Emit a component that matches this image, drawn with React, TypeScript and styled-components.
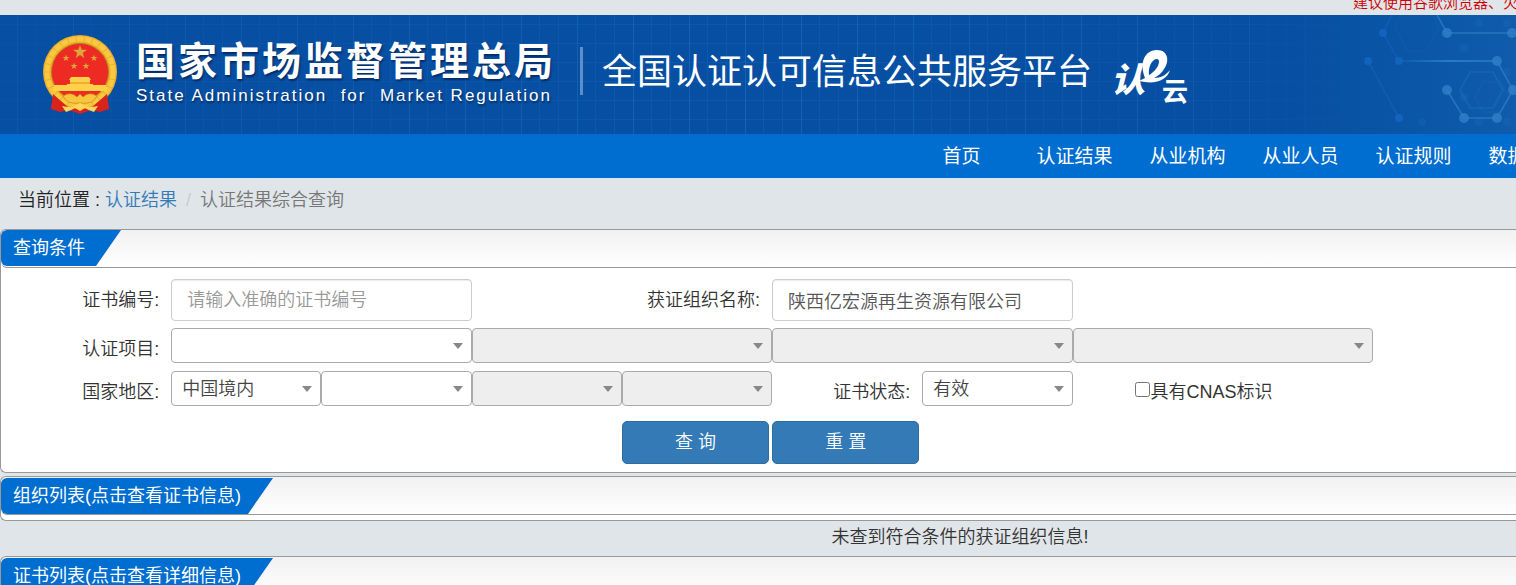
import React from 'react';
import styled, { createGlobalStyle } from 'styled-components';

const Global = createGlobalStyle`
  * { box-sizing: border-box; }
  html { background: #e0e5e9; }
  body {
    margin: 0;
    color: #333;
    font: 350 18px/27px "Liberation Sans", "Noto Sans CJK SC", sans-serif;
    overflow-x: hidden;
  }
  input, select, button { font: inherit; }
`;

const Notice = styled.div`
  height: 15px;
  overflow: hidden;
  display: flex;
  align-items: flex-end;
  padding-left: 1353px;
  color: #c00;
  font-size: 15px;
  line-height: 24px;
  white-space: nowrap;
`;

const Header = styled.header`
  position: relative;
  height: 119px;
  overflow: hidden;
  display: flex;
  align-items: flex-start;
  padding: 20px 0 0 41px;
  background: #064fa2;
  color: #fff;
  white-space: nowrap;
`;

const Backdrop = styled.svg`
  position: absolute;
  inset: 0;
  width: 100%;
  height: 100%;
`;

const Emblem = styled.svg`
  position: relative;
  width: 78px;
  height: 80px;
  flex: none;
`;

const Agency = styled.div`
  position: relative;
  margin-left: 17px;
  padding-top: 3px;
  text-shadow: 1px 2px 2px rgba(0, 20, 60, 0.6);
`;

const AgencyName = styled.div`
  font-size: 39px;
  line-height: 48px;
  font-weight: 700;
  letter-spacing: 3px;
`;

const AgencyEnglish = styled.div`
  font: 400 17px/20px "Liberation Sans", sans-serif;
  letter-spacing: 2px;
  white-space: pre;
`;

const Divider = styled.div`
  position: relative;
  width: 3px;
  height: 48px;
  margin: 12px 19px 0 24px;
  background: #5c8fca;
`;

const Platform = styled.h1`
  position: relative;
  margin: 12px 20px 0 0;
  font-size: 35px;
  line-height: 50px;
  font-weight: 400;
`;

const CloudLogo = styled.svg`
  position: relative;
  width: 78px;
  height: 58px;
  margin-top: 14px;
  flex: none;
  fill: #fff;
`;

const CloudText = styled.text`
  font: 700 26px "Noto Sans CJK SC", sans-serif;
`;

const BrushText = styled.text`
  font: italic 900 34px "Noto Sans CJK SC", sans-serif;
`;

const Nav = styled.nav`
  height: 44px;
  display: flex;
  overflow: hidden;
  padding-left: 905px;
  background: #006dd0;
`;

const NavLink = styled.a`
  flex: 0 0 113px;
  color: #fff;
  font-size: 19px;
  line-height: 46px;
  font-weight: 400;
  text-align: center;
  text-decoration: none;
  white-space: nowrap;
`;

const Crumbs = styled.div`
  display: flex;
  height: 51px;
  padding: 9px 0 0 18px;
  color: #777;
`;

const Here = styled.span`
  color: #222;
  white-space: pre;
`;

const CrumbLink = styled.a`
  color: #337ab7;
  text-decoration: none;
`;

const Slash = styled.span`
  padding: 0 9px;
  color: #ccc;
`;

const Panel = styled.section`
  border: 1px solid #999;
  border-right: 0;
  border-radius: 6px 0 0 6px;
  background: #fff;
  margin-bottom: 3px;
`;

const PanelHead = styled.div<{ $inset?: boolean }>`
  height: 38px;
  padding-top: ${p => (p.$inset ? 1 : 0)}px;
  border-bottom: 1px solid #999;
  border-radius: 6px 0 0 6px;
  background: linear-gradient(#f1f1f1, #fff);
`;

const Tab = styled.h2<{ $wide?: boolean }>`
  width: ${p => (p.$wide ? 272 : 120)}px;
  height: 36px;
  margin: 0;
  padding-left: 12px;
  border-radius: 6px 0 0 6px;
  background: #006dd0;
  clip-path: polygon(0 0, 100% 0, calc(100% - 25px) 100%, 0 100%);
  color: #fff;
  font-size: 18px;
  line-height: 37px;
  font-weight: 400;
  white-space: nowrap;
`;

const Form = styled.form`
  display: grid;
  grid-template-columns: repeat(9, 1fr);
  padding: 11px 143px 8px 20px;
`;

const Label = styled.label<{ $span?: number }>`
  grid-column: span ${p => p.$span ?? 1};
  padding: 8px 12px 0 0;
  text-align: right;
  white-space: nowrap;
`;

const Spacer = styled.span`
  grid-column: span 2;
`;

const TextInput = styled.input`
  grid-column: span 2;
  width: 100%;
  min-width: 0;
  height: 42px;
  margin-bottom: 7px;
  padding: 0 15px;
  border: 1px solid #ccc;
  border-radius: 4px;
  box-shadow: inset 0 1px 1px rgba(0, 0, 0, 0.08);
  color: #555;
  &::placeholder { color: #999; }
`;

const Select = styled.select<{ $span?: number }>`
  grid-column: span ${p => p.$span ?? 1};
  appearance: none;
  width: 100%;
  height: 35px;
  margin-bottom: 8px;
  padding: 2px 10px 0;
  border: 1px solid #aaa;
  border-radius: 4px;
  color: #444;
  opacity: 1;
  background: #fff url("data:image/svg+xml,%3Csvg xmlns='http://www.w3.org/2000/svg' width='10' height='6'%3E%3Cpath d='M0 0h10L5 6z' fill='%23888'/%3E%3C/svg%3E") no-repeat right 8px center;
  &:disabled { background-color: #eee; }
`;

const Check = styled.label`
  grid-column: span 2;
  display: flex;
  padding: 8px 0 0 62px;
  white-space: nowrap;
`;

const CheckBox = styled.input`
  width: 15px;
  height: 15px;
  margin: 3px 1px 0 0;
`;

const Actions = styled.div`
  grid-column: 5 / span 2;
  display: grid;
  grid-template-columns: 1fr 1fr;
  column-gap: 3px;
  margin-right: 3px;
  padding-top: 7px;
`;

const Button = styled.button`
  height: 43px;
  padding: 0;
  border: 1px solid #2e6da4;
  border-radius: 5px;
  background: #337ab7;
  color: #fff;
  white-space: pre;
`;

const Slot = styled.div`
  height: 5px;
`;

const Empty = styled.p`
  margin: 0;
  height: 32px;
  padding-left: 404px;
  text-align: center;
`;

const nodes = [[1447, 18], [1512, 18], [1383, 18], [1399, 46], [1497, 46], [1368, 46], [1447, 75], [1513, 75], [1399, 103], [1464, 103], [1497, 103]];
const faintNodes = [[1479, 8], [1507, 8], [1464, 33], [1507, 57], [1464, 82], [1479, 107], [1507, 107], [1422, 107]];
const star = 'M0-7 1.7-2.2H7L2.7.9 4.3 6 0 3-4.3 6-2.7.9-7-2.2h5.3Z';
const menu = ['首页', '认证结果', '从业机构', '从业人员', '认证规则', '数据查询'];

export default function App() {
  return (
    <>
      <Global />
      <Notice>建议使用谷歌浏览器、火狐</Notice>
      <Header>
        <Backdrop aria-hidden="true">
          <defs>
            <pattern id="grid" width="56" height="57" x="17" y="9" patternUnits="userSpaceOnUse">
              <path d="M0 .5H56M0 19.5H56M0 38.5H56M18.5 0V57M37.5 0V57" stroke="#1560b4" opacity=".55" />
              <path d="M.5 0V57" stroke="#1f6fc4" opacity=".6" />
            </pattern>
            <linearGradient id="fade">
              <stop stopColor="#fff" stopOpacity=".4" />
              <stop offset=".5" stopColor="#fff" />
              <stop offset=".8" stopColor="#fff" stopOpacity=".6" />
              <stop offset=".94" stopColor="#fff" stopOpacity="0" />
            </linearGradient>
            <mask id="fadeMask"><rect width="100%" height="100%" fill="url(#fade)" /></mask>
            <linearGradient id="glow">
              <stop offset=".85" stopColor="#1560b0" stopOpacity="0" />
              <stop offset="1" stopColor="#1560b0" stopOpacity=".7" />
            </linearGradient>
            <linearGradient id="beam" gradientUnits="userSpaceOnUse" x1="1399" y1="0" x2="1497" y2="0">
              <stop stopColor="#2a86c8" stopOpacity=".1" />
              <stop offset=".5" stopColor="#2a86c8" />
              <stop offset="1" stopColor="#2a86c8" stopOpacity=".7" />
            </linearGradient>
          </defs>
          <rect width="100%" height="100%" fill="url(#grid)" mask="url(#fadeMask)" />
          <rect width="100%" height="100%" fill="url(#glow)" />
          <g fill="none" stroke="#2a80c4" strokeWidth="1.6">
            <path d="M1437 0l10 18h65M1497 46l16 29-16 28h-33l-17-28" opacity=".75" />
            <path d="M1399 45.5H1497V46.5H1399Z" stroke="url(#beam)" strokeWidth="1" opacity=".8" />
            <path d="M1392 0l-9 18 16 28M1368 46l31 57" stroke="#1d6fd0" opacity=".3" />
            <path d="M1470 57h23l10 18-10 18h-23l-10-18Z" opacity=".3" />
            <path d="M1483 67h18l8 15-8 15h-18l-8-15Z" opacity=".15" />
            <path d="M1401 0l-6 12 13 24h18l13-24-6-12" opacity=".1" />
          </g>
          {nodes.map(([x, y], i) => (
            <circle key={i} cx={x} cy={y} r={x > 1440 ? 5 : 4} fill={x > 1440 ? '#2f80c8' : '#1366c2'} opacity=".8" />
          ))}
          {faintNodes.map(([x, y], i) => (
            <circle key={i} cx={x} cy={y} r="4" fill="#2478c4" opacity=".2" />
          ))}
        </Backdrop>
        <Emblem viewBox="0 0 78 80" role="img" aria-label="国徽">
          <path d="M13 56 10 74l9 3 9-2 11 4 11-4 9 2 9-3-4-18Z" fill="#d8231c" />
          <path d="M14 62l-1 12M64 62l1 12" stroke="#a51612" strokeWidth="2" />
          <circle cx="39" cy="37" r="37" fill="#eeb02b" />
          <circle cx="39" cy="37" r="33" fill="none" stroke="#f8c842" strokeWidth="5" strokeDasharray="7 1" />
          <circle cx="39" cy="37" r="28.5" fill="#ee2a24" stroke="#b87918" strokeWidth="1" />
          <g fill="#dfa63a">
            <path d={star} transform="translate(39 17)" />
            <path d={star} transform="translate(25 23) scale(.5)" />
            <path d={star} transform="translate(53 23) scale(.5)" />
            <path d={star} transform="translate(33 31) scale(.5)" />
            <path d={star} transform="translate(45 31) scale(.5)" />
          </g>
          <path d="M30 42h18l2 3h-1v4h3v1h13l1 6H12l1-6h13v-1h3v-4h-1Z" fill="#ffd04a" />
          <path d="M29 48h20" stroke="#d98f20" strokeWidth="1" />
          <path d="M22 61q8-5 14 1l3-3 3 3q6-6 14-1-4 9-17 7-13 2-17-7Z" fill="#f8c63c" stroke="#c88418" strokeWidth=".7" />
          <path d="M12 59l16 14-5 3-13-2ZM66 59 50 73l5 3 13-2Z" fill="#d9231c" />
          <path d="M21 71q9 2 12 0l6-3 6 3q3 2 12 0l-4 6q-6-2-9-4l-5 3-5-3q-3 2-9 4Z" fill="#ffd65a" />
        </Emblem>
        <Agency>
          <AgencyName>国家市场监督管理总局</AgencyName>
          <AgencyEnglish>State Administration  for  Market Regulation</AgencyEnglish>
        </Agency>
        <Divider />
        <Platform>全国认证认可信息公共服务平台</Platform>
        <CloudLogo viewBox="0 0 78 58" role="img" aria-label="认e云">
          <BrushText x="-1" y="43">认</BrushText>
          <path fillRule="evenodd" d="M33 29C27 13 33 1 45 1c11 0 13 11 7 19-2 4-6 7-10 9 7 0 12-3 16-8-3 10-14 15-31 11 2-1 4-2 6-3ZM37 26c8-4 13-15 8-16-5 0-9 8-8 16Z" />
          <CloudText x="50" y="52">云</CloudText>
        </CloudLogo>
      </Header>
      <Nav>
        {menu.map(t => (
          <NavLink href="#" key={t}>{t}</NavLink>
        ))}
      </Nav>
      <Crumbs>
        <Here>当前位置 : </Here>
        <CrumbLink href="#">认证结果</CrumbLink>
        <Slash>/</Slash>
        <span>认证结果综合查询</span>
      </Crumbs>
      <Panel>
        <PanelHead><Tab>查询条件</Tab></PanelHead>
        <Form onSubmit={e => e.preventDefault()}>
          <Label htmlFor="cert">证书编号:</Label>
          <TextInput id="cert" placeholder="请输入准确的证书编号" />
          <Label htmlFor="org" $span={2}>获证组织名称:</Label>
          <TextInput id="org" defaultValue="陕西亿宏源再生资源有限公司" />
          <Spacer />
          <Label htmlFor="item">认证项目:</Label>
          <Select id="item" $span={2} />
          <Select aria-label="认证项目二级" $span={2} disabled />
          <Select aria-label="认证项目三级" $span={2} disabled />
          <Select aria-label="认证项目四级" $span={2} disabled />
          <Label htmlFor="area">国家地区:</Label>
          <Select id="area"><option>中国境内</option></Select>
          <Select aria-label="省份" />
          <Select aria-label="城市" disabled />
          <Select aria-label="区县" disabled />
          <Label htmlFor="state">证书状态:</Label>
          <Select id="state"><option>有效</option></Select>
          <Check><CheckBox type="checkbox" />具有CNAS标识</Check>
          <Actions>
            <Button type="submit">查 询</Button>
            <Button type="reset">重 置</Button>
          </Actions>
        </Form>
      </Panel>
      <Panel>
        <PanelHead $inset><Tab $wide>组织列表(点击查看证书信息)</Tab></PanelHead>
        <Slot />
      </Panel>
      <Empty>未查到符合条件的获证组织信息!</Empty>
      <Panel>
        <PanelHead $inset><Tab $wide>证书列表(点击查看详细信息)</Tab></PanelHead>
      </Panel>
    </>
  );
}
